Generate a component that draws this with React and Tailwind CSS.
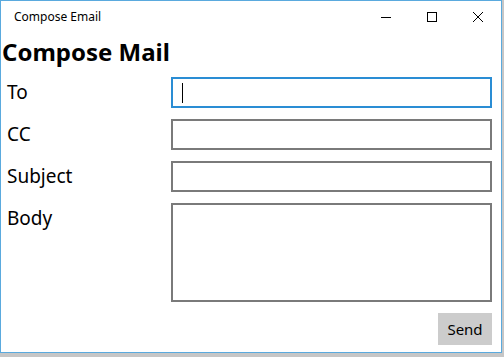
import React from "react";

export default function App() {
  const font = { fontFamily: '"Noto Sans", "Open Sans", sans-serif' };
  return (
    <div className="w-[504px] h-[357px] bg-[#c6c6c6] overflow-hidden" style={font}>
      <div className="w-[502px] h-[353px] bg-white border border-[#5aaade] flex flex-col">
        <div className="h-[31px] flex items-center shrink-0">
          <div className="pl-[13px] text-[12px] text-black flex-1 leading-none">Compose Email</div>
          <div className="flex items-center h-full">
            <div className="w-[46px] h-full flex items-center justify-center">
              <svg width="10" height="10" viewBox="0 0 10 10"><path d="M0 5.5H10" stroke="#000" strokeWidth="1" /></svg>
            </div>
            <div className="w-[46px] h-full flex items-center justify-center">
              <svg width="10" height="10" viewBox="0 0 10 10"><rect x="0.5" y="0.5" width="9" height="9" fill="none" stroke="#000" strokeWidth="1" /></svg>
            </div>
            <div className="w-[46px] h-full flex items-center justify-center">
              <svg width="10" height="10" viewBox="0 0 10 10"><path d="M0 0L10 10M10 0L0 10" stroke="#000" strokeWidth="1" /></svg>
            </div>
          </div>
        </div>
        <div className="pl-[1px] pt-[2px] text-[24px] font-bold leading-[36px] text-black">Compose Mail</div>
        <div className="mt-[7px] grid grid-cols-[170px_321px] gap-y-[11px] text-[19px] text-black">
          <div className="pl-[6px] leading-[30px]">To</div>
          <div className="h-[31px] border-2 border-[#2a8dd4] flex items-center pl-[9px]">
            <div className="w-[1px] h-[20px] bg-black" />
          </div>
          <div className="pl-[6px] leading-[30px]">CC</div>
          <div className="h-[31px] border-2 border-[#7a7a7a]" />
          <div className="pl-[6px] leading-[30px]">Subject</div>
          <div className="h-[31px] border-2 border-[#7a7a7a]" />
          <div className="pl-[6px] leading-[30px]">Body</div>
          <div className="h-[99px] border-2 border-[#7a7a7a]" />
        </div>
        <div className="mt-[11px] flex justify-end pr-[9px]">
          <div className="w-[54px] h-[32px] bg-[#cccccc] flex items-center justify-center text-[15px] text-black">Send</div>
        </div>
      </div>
    </div>
  );
}
